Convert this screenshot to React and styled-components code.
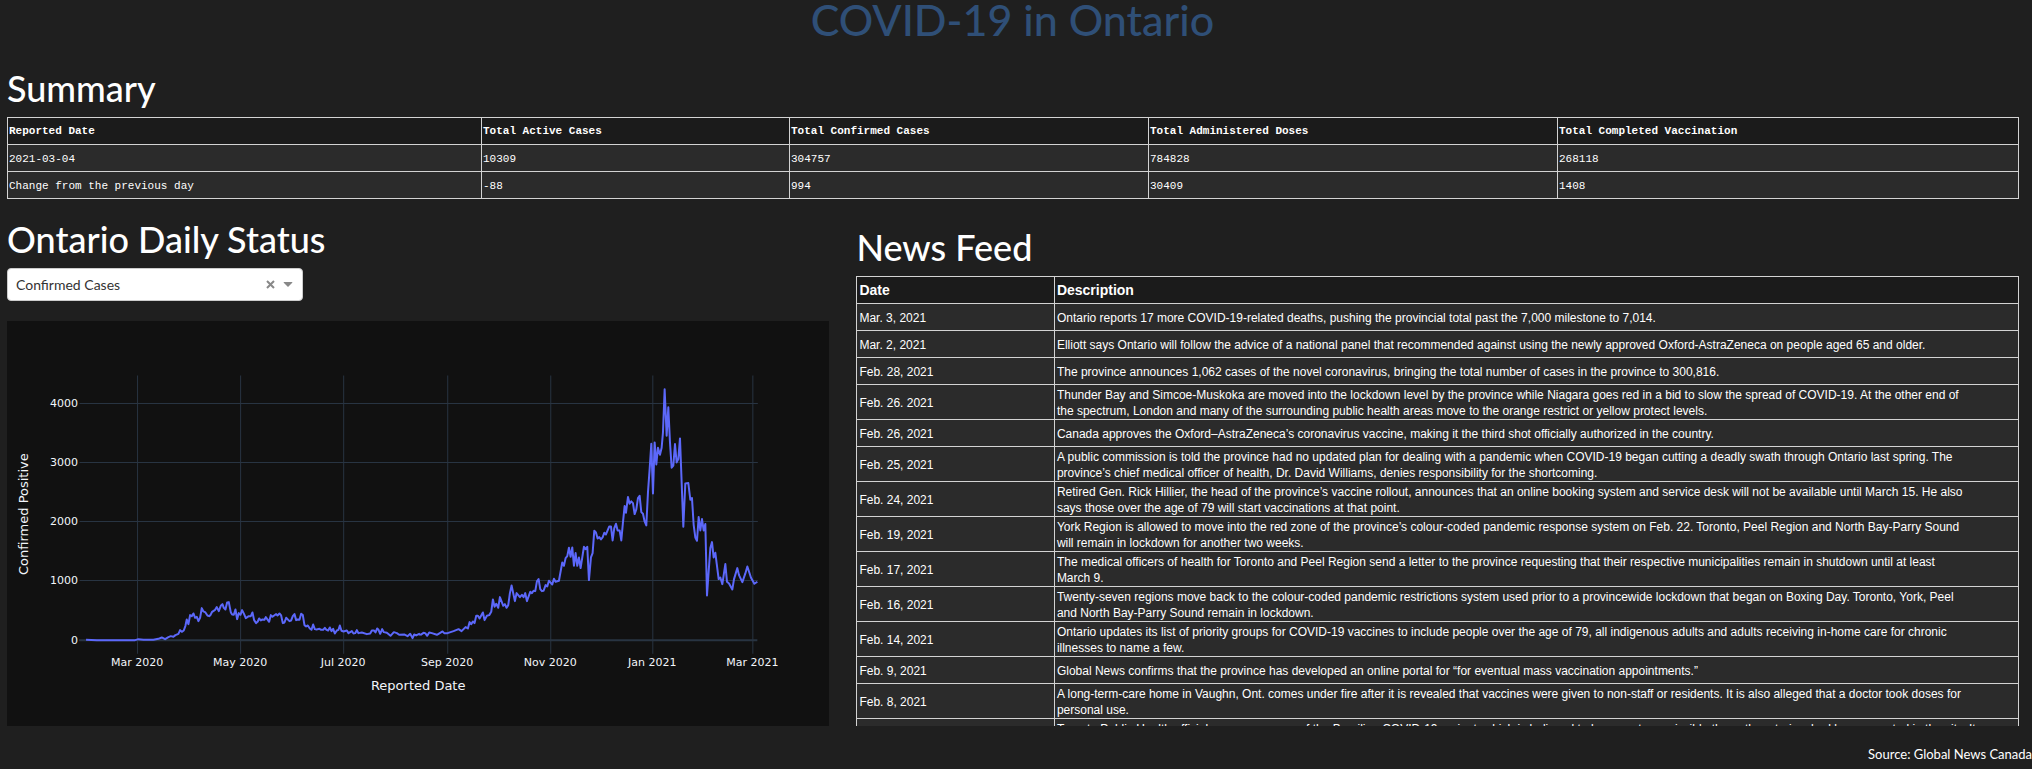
import React, { useState } from "react";
import styled, { createGlobalStyle } from "styled-components";

const GlobalStyle = createGlobalStyle`
  * { box-sizing: border-box; }
  body {
    margin: 0;
    background: #1f1f1f;
    color: #fff;
    font-family: Lato, "Liberation Sans", sans-serif;
    font-size: 14px;
    line-height: 20px;
  }
`;

const Page = styled.div`
  padding-left: 7px;
`;

const Title = styled.h1`
  margin: 0 14px 0 0;
  padding-bottom: 26px;
  color: #2f4f77;
  font-size: 43px;
  font-weight: 500;
  line-height: 40px;
  text-align: center;
`;

const Content = styled.main`
  padding-right: 13px;
`;

const Heading = styled.h2`
  margin: 0;
  padding-bottom: 7px;
  font-size: 36px;
  font-weight: 500;
  line-height: 44px;
`;

const Columns = styled.div`
  display: grid;
  grid-template-columns: 822fr 1162fr;
  gap: 27px;
  padding-top: 18px;
`;

const StatusPanel = styled.section`
  min-width: 0;
`;

const NewsPanel = styled.section`
  min-width: 0;
  padding-top: 8px;
`;

const Table = styled.table`
  width: 100%;
  table-layout: fixed;
  border-collapse: collapse;
  color: #fff;
  text-align: left;
`;

const Col = styled.col`
  width: ${(p) => p.$width};
`;

const HeadCell = styled.th`
  height: 27px;
  padding: 0 2px;
  border: 1px solid #d3d3d3;
  background: #1b1b1b;
`;

const Cell = styled.td`
  height: 27px;
  padding: 2px 2px 0;
  border: 1px solid #d3d3d3;
  background: #2b2b2b;
`;

const SummaryTable = styled(Table)`
  font-family: "Courier New", "Liberation Mono", monospace;
  font-size: 11px;
  line-height: 16px;

  th { padding: 0 1px; }
  td { padding: 1px 1px 0; }
`;

const NewsTable = styled(Table)`
  font-family: "Liberation Sans", Arial, sans-serif;
  font-size: 12px;
  line-height: 16px;

  th { font-size: 14px; }
  td { white-space: pre-line; }
`;

const NewsWindow = styled.div`
  height: 450px;
  overflow: hidden;
`;

const Picker = styled.div`
  position: relative;
  width: 296px;
`;

const Select = styled.select`
  display: block;
  width: 100%;
  height: 33px;
  padding: 0 56px 0 8px;
  appearance: none;
  border: 1px solid #ccc;
  border-radius: 4px;
  background: #fff;
  color: #333;
  font: inherit;
`;

const PickerIcons = styled.div`
  position: absolute;
  top: 0;
  right: 10px;
  bottom: 0;
  display: flex;
  align-items: center;
  gap: 8px;
  pointer-events: none;
`;

const ClearButton = styled.button`
  display: flex;
  padding: 0;
  border: 0;
  background: none;
  pointer-events: auto;
`;

const ChartPanel = styled.div`
  margin-top: 20px;
  background: #111;
`;

const ChartSvg = styled.svg`
  display: block;
  width: 100%;
  height: auto;
  font-family: Verdana, "DejaVu Sans", sans-serif;
  fill: #f2f5fa;
`;

const Footer = styled.footer`
  padding-top: 18px;
  font-size: 13px;
  text-align: right;
`;

const summaryColumns = [
  ["Reported Date", "474"],
  ["Total Active Cases", "308"],
  ["Total Confirmed Cases", "359"],
  ["Total Administered Doses", "409"],
  ["Total Completed Vaccination", "461"],
];

const summaryRows = [
  ["2021-03-04", "10309", "304757", "784828", "268118"],
  ["Change from the previous day", "-88", "994", "30409", "1408"],
];

const news = [
  ["Mar. 3, 2021", "Ontario reports 17 more COVID-19-related deaths, pushing the provincial total past the 7,000 milestone to 7,014."],
  ["Mar. 2, 2021", "Elliott says Ontario will follow the advice of a national panel that recommended against using the newly approved Oxford-AstraZeneca on people aged 65 and older."],
  ["Feb. 28, 2021", "The province announces 1,062 cases of the novel coronavirus, bringing the total number of cases in the province to 300,816."],
  ["Feb. 26. 2021", "Thunder Bay and Simcoe-Muskoka are moved into the lockdown level by the province while Niagara goes red in a bid to slow the spread of COVID-19. At the other end of\nthe spectrum, London and many of the surrounding public health areas move to the orange restrict or yellow protect levels."],
  ["Feb. 26, 2021", "Canada approves the Oxford–AstraZeneca’s coronavirus vaccine, making it the third shot officially authorized in the country."],
  ["Feb. 25, 2021", "A public commission is told the province had no updated plan for dealing with a pandemic when COVID-19 began cutting a deadly swath through Ontario last spring. The\nprovince’s chief medical officer of health, Dr. David Williams, denies responsibility for the shortcoming."],
  ["Feb. 24, 2021", "Retired Gen. Rick Hillier, the head of the province’s vaccine rollout, announces that an online booking system and service desk will not be available until March 15. He also\nsays those over the age of 79 will start vaccinations at that point."],
  ["Feb. 19, 2021", "York Region is allowed to move into the red zone of the province’s colour-coded pandemic response system on Feb. 22. Toronto, Peel Region and North Bay-Parry Sound\nwill remain in lockdown for another two weeks."],
  ["Feb. 17, 2021", "The medical officers of health for Toronto and Peel Region send a letter to the province requesting that their respective municipalities remain in shutdown until at least\nMarch 9."],
  ["Feb. 16, 2021", "Twenty-seven regions move back to the colour-coded pandemic restrictions system used prior to a provincewide lockdown that began on Boxing Day. Toronto, York, Peel\nand North Bay-Parry Sound remain in lockdown."],
  ["Feb. 14, 2021", "Ontario updates its list of priority groups for COVID-19 vaccines to include people over the age of 79, all indigenous adults and adults receiving in-home care for chronic\nillnesses to name a few."],
  ["Feb. 9, 2021", "Global News confirms that the province has developed an online portal for “for eventual mass vaccination appointments.”"],
  ["Feb. 8, 2021", "A long-term-care home in Vaughn, Ont. comes under fire after it is revealed that vaccines were given to non-staff or residents. It is also alleged that a doctor took doses for\npersonal use."],
  ["Feb. 7, 2021", "Toronto Public Health officials are now aware of the Brazilian COVID-19 variant, which is believed to be more transmissible than other strains, had been reported in the city. It\nwas found in a resident."],
];

const xTicks = [
  ["Mar 2020", 130],
  ["May 2020", 233],
  ["Jul 2020", 336],
  ["Sep 2020", 440],
  ["Nov 2020", 543],
  ["Jan 2021", 645],
  ["Mar 2021", 745],
];

const yTicks = [
  ["4000", 82],
  ["3000", 141],
  ["2000", 200],
  ["1000", 259],
];

const trend2020 =
  "258,962 290,963 350,963 405,963 415,960 430,962 460,962 475,959 485,955 495,960 505,954 512,951 520,953 526,948 535,944 540,933 545,938 551,934 556,920 560,901 565,915 570,888 575,891 580,883 585,896 590,893 595,906 600,896 605,867 610,877 616,880 622,889 627,891 631,888 636,878 645,872 650,864 656,876 662,860 667,855 671,866 676,871 681,850 686,849 692,879 696,886 701,887 706,871 711,900 716,882 721,887 726,873 732,885 737,897 746,891 752,891 757,880 762,903 768,912 773,907 777,898 782,904 787,901 793,902 797,894 807,908 812,888 817,893 822,889 828,885 832,889 838,883 843,889 848,912 853,910 858,896 868,906 873,904 878,891 883,885 888,903 893,901 898,902 903,884 908,888 913,918 918,922 923,919 929,928 934,932 939,916 944,930 949,931 958,929 963,932 969,932 974,926 979,932 984,934 989,925 994,936 999,929 1004,943 1010,934 1015,932 1019,919 1024,935 1030,937 1040,934 1045,942 1055,936 1060,943 1065,942 1070,933 1075,942 1085,940 1100,945 1110,943 1115,934 1121,934 1126,940 1131,928 1135,932 1140,944 1146,930 1151,939 1160,941 1171,950 1181,939 1190,942 1197,947 1212,946 1222,951 1230,944 1237,957 1242,946 1248,949 1257,944 1260,948";

const trendWinter =
  "0,948 10,941 15,942 21,950 27,940 35,942 50,947 60,941 67,937 72,942 82,942 100,936 115,930 124,936 136,924 143,928 148,909 153,915 158,907 163,912 168,890 173,890 178,898 188,880 193,903 200,890 207,888 213,878 218,841 223,863 228,854 234,866 239,834 249,860 254,855 259,866 264,858 269,822 274,799 284,846 289,822 299,834 305,827 310,834 315,822 320,846 330,818 335,822 340,815 345,816 350,787 355,780 360,810 365,816 370,815 376,798 381,802 386,785 396,796 401,779 406,788 416,785 426,730 431,740 436,717 441,711 446,686 451,713 456,685 461,740 466,702 471,740 476,715 481,747 491,683 496,690 501,683 506,783 512,715 517,702 522,635 527,640 532,658 537,654 542,661 547,655 552,641 557,646 567,622 572,622 577,664 582,627 587,614 592,634 598,634 603,664 608,610 613,561 617,581 623,534 628,554 633,547 638,552 643,585 648,571 653,537 658,530 663,579 668,584 673,607 678,619 683,520 688,450 693,374 698,523 703,370 708,436 713,386 719,407 724,386 728,340 733,211 739,350 744,265 749,370 754,446 759,440 764,375 769,430 774,420 779,358 784,490 789,623 795,493 804,492 810,542 815,537 820,617 825,655 830,665 835,594 840,634 845,600 850,634 855,615 860,829 865,757 870,687 875,669 880,715 885,701 895,780 900,775 906,795 915,735 920,788 926,793 936,811 941,780 951,747 956,768 966,789 975,763 981,742 992,776 1002,794 1011,788";

function StatusChart() {
  return (
    <ChartSvg viewBox="0 0 822 405" role="img" aria-label="Confirmed positive cases by reported date">
      <g stroke="#283442" strokeWidth="1" transform="translate(.5 .5)">
        {xTicks.map(([label, x]) => (
          <line key={label} x1={x} x2={x} y1="54" y2="332" />
        ))}
        {yTicks.map(([label, y]) => (
          <line key={label} x1="72" x2="750" y1={y} y2={y} />
        ))}
      </g>
      <line x1="72" x2="750" y1="319" y2="319" stroke="#283442" strokeWidth="2" />
      <g transform="scale(.33333) translate(-21 -6)" fill="none" stroke="#5c68fa" strokeWidth="6" strokeLinejoin="round">
        <polyline points={trend2020} />
        <polyline points={trendWinter} transform="translate(1260 0)" />
      </g>
      <g fontSize="11" textAnchor="middle">
        {xTicks.map(([label, x]) => (
          <text key={label} x={x} y="345">{label}</text>
        ))}
      </g>
      <g fontSize="11" textAnchor="end">
        {yTicks.map(([label, y]) => (
          <text key={label} x="71" y={y + 4}>{label}</text>
        ))}
        <text x="71" y="323">0</text>
      </g>
      <g fontSize="13" textAnchor="middle">
        <text x="411" y="369">Reported Date</text>
        <text transform="translate(21 193) rotate(-90)">Confirmed Positive</text>
      </g>
    </ChartSvg>
  );
}

export default function App() {
  const [metric, setMetric] = useState("Confirmed Cases");
  return (
    <>
      <GlobalStyle />
      <Page>
        <Title>COVID-19 in Ontario</Title>
        <Content>
          <section>
            <Heading>Summary</Heading>
            <SummaryTable>
              <colgroup>
                {summaryColumns.map(([name, share]) => (
                  <Col key={name} $width={`calc(100% * ${share} / 2011)`} />
                ))}
              </colgroup>
              <thead>
                <tr>
                  {summaryColumns.map(([name]) => (
                    <HeadCell key={name} scope="col">{name}</HeadCell>
                  ))}
                </tr>
              </thead>
              <tbody>
                {summaryRows.map((row) => (
                  <tr key={row[0]}>
                    {row.map((value) => (
                      <Cell key={value}>{value}</Cell>
                    ))}
                  </tr>
                ))}
              </tbody>
            </SummaryTable>
          </section>
          <Columns>
            <StatusPanel>
              <Heading>Ontario Daily Status</Heading>
              <Picker>
                <Select aria-label="Daily status metric" value={metric} onChange={(e) => setMetric(e.target.value)}>
                  <option>Confirmed Cases</option>
                </Select>
                <PickerIcons>
                  <ClearButton type="button" aria-label="Clear value">
                    <svg width="9" height="9" viewBox="0 0 9 9" stroke="#888" strokeWidth="2">
                      <path d="M1 1 8 8M8 1 1 8" />
                    </svg>
                  </ClearButton>
                  <svg width="10" height="5" viewBox="0 0 10 5" fill="#888">
                    <path d="M1 0H9Q10 0 9 1L5 5 1 1Q0 0 1 0Z" />
                  </svg>
                </PickerIcons>
              </Picker>
              <ChartPanel>
                <StatusChart />
              </ChartPanel>
            </StatusPanel>
            <NewsPanel>
              <Heading>News Feed</Heading>
              <NewsWindow>
                <NewsTable>
                  <colgroup>
                    <Col $width="17%" />
                    <Col $width="83%" />
                  </colgroup>
                  <thead>
                    <tr>
                      <HeadCell scope="col">Date</HeadCell>
                      <HeadCell scope="col">Description</HeadCell>
                    </tr>
                  </thead>
                  <tbody>
                    {news.map(([date, text]) => (
                      <tr key={date}>
                        <Cell>{date}</Cell>
                        <Cell>{text}</Cell>
                      </tr>
                    ))}
                  </tbody>
                </NewsTable>
              </NewsWindow>
            </NewsPanel>
          </Columns>
        </Content>
        <Footer>Source: Global News Canada</Footer>
      </Page>
    </>
  );
}
